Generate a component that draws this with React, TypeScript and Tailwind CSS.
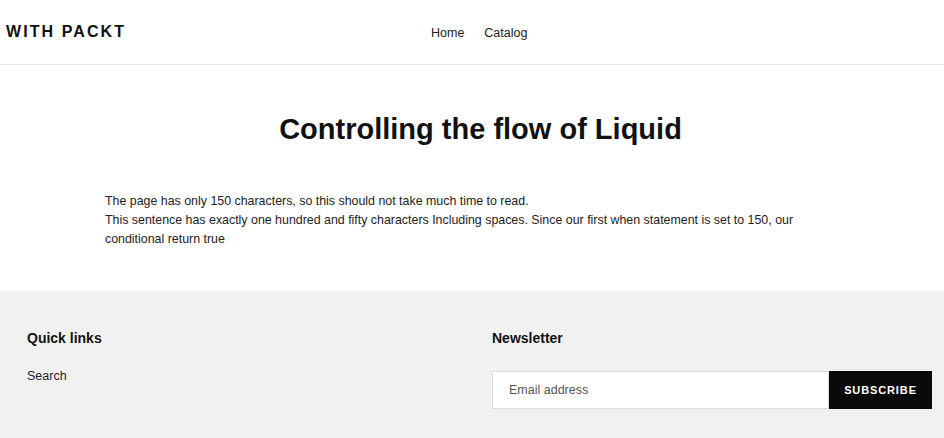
export default function App() {
  return (
    <div className="min-h-[438px] bg-white text-[#111] font-['Liberation_Sans',Arial,sans-serif]">
      {/* header */}
      <header className="h-[65px] border-b border-[#e8e8e8] flex items-center relative">
        <div className="pl-[6px] text-[16px] font-bold tracking-[0.13em] text-[#111]">WITH PACKT</div>
        <nav className="absolute left-[431px] top-[24px] flex gap-[20px] text-[12.5px] text-[#222]">
          <span>Home</span>
          <span>Catalog</span>
        </nav>
      </header>

      {/* main */}
      <main className="pt-[47px] pb-[42px]">
        <h1 className="text-center text-[29px] font-bold leading-[34px] pl-[17px]">Controlling the flow of Liquid</h1>
        <div className="mt-[46px] pl-[105px] w-[815px] text-[12.4px] leading-[19px] text-[#222]">
          <p>The page has only 150 characters, so this should not take much time to read.</p>
          <p>
            This sentence has exactly one hundred and fifty characters Including spaces. Since our first when statement is set to 150, our
            conditional return true
          </p>
        </div>
      </main>

      {/* footer */}
      <footer className="bg-[#f1f1f1] h-[147px] flex pl-[27px] pt-[39px]">
        <div className="w-[465px]">
          <h4 className="text-[14px] font-bold leading-[16px]">Quick links</h4>
          <div className="mt-[21px] text-[12.5px] text-[#222]">Search</div>
        </div>
        <div className="flex-1">
          <h4 className="text-[14px] font-bold leading-[16px]">Newsletter</h4>
          <div className="mt-[25px] flex w-[440px] h-[38px]">
            <div className="flex-1 bg-white border border-[#dcdcdc] flex items-center pl-[16px] text-[12.5px] text-[#555]">
              Email address
            </div>
            <button className="w-[103px] bg-[#0a0a0a] text-white text-[11px] font-bold tracking-[0.08em]">SUBSCRIBE</button>
          </div>
        </div>
      </footer>
    </div>
  );
}
